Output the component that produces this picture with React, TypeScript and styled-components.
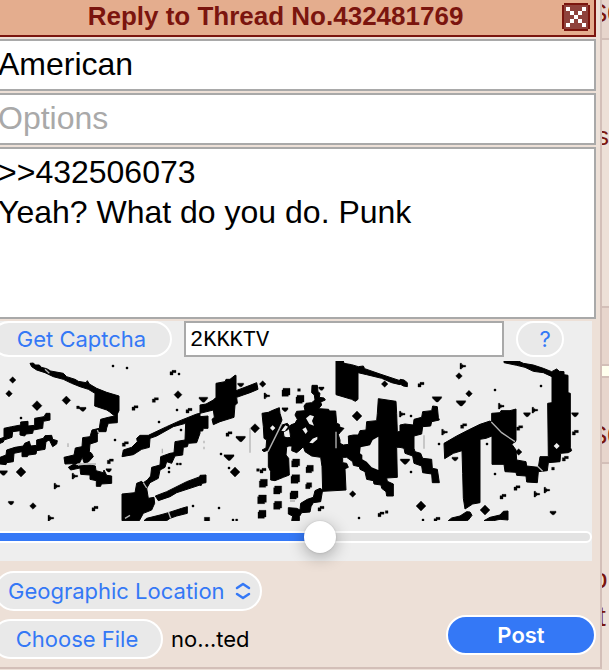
import React, { useRef, useState } from "react";
import styled, { createGlobalStyle } from "styled-components";

const c = {
  panel: "#ede0d7",
  line: "#d3bfb8",
  shade: "#e7d5cc",
  maroon: "#7b150e",
  field: "#a9a9a9",
  blue: "#3478f6",
};

const GlobalStyle = createGlobalStyle`
  *, *::before, *::after { box-sizing: border-box; }
  html, body { margin: 0; background: ${c.panel}; overflow: hidden; }
  body { font-family: "Liberation Sans", Arial, sans-serif; color: #000; }
  button, input, textarea, select { margin: 0; font: inherit; color: inherit; }
`;

const Page = styled.div`
  display: grid;
  grid-template-columns: minmax(0, 1fr) 7px;
  min-height: 100vh;
  overflow: hidden;
`;

const Dialog = styled.form`
  align-self: start;
  margin-left: -6px;
  padding: 0 4px 8px 0;
  border: solid ${c.line};
  border-width: 0 2px 2px 0;
  background: ${c.panel};
`;

const Header = styled.header`
  display: flex;
  align-items: center;
  gap: 5px;
  height: 37px;
  margin-bottom: 2px;
  padding: 0 4px 2px 0;
  border: solid ${c.maroon};
  border-width: 0 2px 2px 0;
  background: #e4ad8e;
`;

const Title = styled.h1`
  flex: 1;
  margin: 0;
  padding-bottom: 2px;
  color: ${c.maroon};
  font-size: 26px;
  line-height: 32px;
  text-align: center;
`;

const CloseButton = styled.button`
  width: 28px;
  height: 28px;
  padding: 0;
  border: 0;
  background: none;
  svg { display: block; }
`;

const Field = styled.input`
  display: block;
  width: 100%;
  height: 52px;
  margin-bottom: 2px;
  padding: 0 2px 2px;
  border: 2px solid ${c.field};
  outline: 0;
  background: #fff;
  font-size: 32px;
  &::placeholder { color: #a9a9a9; opacity: 1; }
`;

const Comment = styled.textarea`
  display: block;
  width: 100%;
  height: 172px;
  margin-bottom: 2px;
  padding: 3px 2px;
  border: 2px solid ${c.field};
  outline: 0;
  background: #fff;
  font-size: 32px;
  line-height: 40px;
  resize: none;
`;

const CaptchaPanel = styled.section`
  margin-right: 4px;
  padding-bottom: 8px;
  background: #eee;
`;

const CaptchaRow = styled.div`
  display: flex;
  gap: 12px;
  height: 36px;
  margin-bottom: 4px;
`;

const Pill = styled.button<{ $width: number; $height: number; $primary?: boolean }>`
  flex: none;
  width: ${(p) => p.$width}px;
  height: ${(p) => p.$height}px;
  padding: 0;
  border: 2px solid #fff;
  border-radius: 20px;
  background: ${(p) => (p.$primary ? c.blue : "#e9e9e9")};
  color: ${(p) => (p.$primary ? "#fff" : c.blue)};
  font-family: Inter, sans-serif;
  font-size: 22px;
  font-weight: ${(p) => (p.$primary ? 600 : 400)};
  line-height: 32px;
`;

const LeftPill = styled(Pill)`
  margin-left: -3px;
`;

const HelpButton = styled(Pill)`
  padding-left: 10px;
`;

const CaptchaInput = styled.input`
  width: 320px;
  height: 36px;
  padding: 2px 4px 0;
  border: 2px solid ${c.field};
  outline: 0;
  background: #fff;
  font-family: "Liberation Mono", "Courier New", monospace;
  font-size: 22px;
`;

const Challenge = styled.svg`
  display: block;
  width: 592px;
  height: 160px;
  margin-left: 6px;
`;

const Slider = styled.input<{ $fill: number }>`
  display: block;
  width: 100%;
  height: 32px;
  appearance: none;
  background: none;
  outline: 0;
  &::-webkit-slider-runnable-track {
    height: 12px;
    border: 2px solid #fff;
    border-radius: 6px;
    background: linear-gradient(to right, ${c.blue} ${(p) => p.$fill}%, #e3e3e3 ${(p) => p.$fill}%);
  }
  &::-webkit-slider-thumb {
    appearance: none;
    width: 32px;
    height: 32px;
    margin-top: -12px;
    border-radius: 50%;
    background: #fff;
    box-shadow: 0 4px 16px rgba(0, 0, 0, 0.3), 0 0 2px rgba(0, 0, 0, 0.15);
  }
`;

const Footer = styled.footer`
  display: flex;
  justify-content: space-between;
  align-items: flex-end;
  padding-top: 10px;
`;

const Choices = styled.div`
  display: grid;
  gap: 8px;
`;

const SelectBox = styled.div`
  display: grid;
  align-items: center;
  width: 268px;
  svg {
    grid-area: 1 / 1;
    justify-self: end;
    margin-right: 11px;
    pointer-events: none;
  }
`;

const Select = styled.select`
  grid-area: 1 / 1;
  width: 100%;
  height: 40px;
  padding: 0 36px 0 12px;
  border: 2px solid #fff;
  border-radius: 20px;
  appearance: none;
  background: #e9e9e9;
  color: ${c.blue};
  font-family: Inter, sans-serif;
  font-size: 22px;
`;

const FileRow = styled.div`
  display: flex;
  align-items: center;
  gap: 8px;
  font-family: Inter, sans-serif;
  font-size: 22px;
`;

const PostButton = styled(Pill)`
  margin-bottom: 4px;
`;

const Behind = styled.aside`
  overflow: hidden;
  color: ${c.maroon};
  white-space: nowrap;
`;

const Slice = styled.div<{ $height: number; $shade?: boolean; $top?: number; $indent?: number }>`
  height: ${(p) => p.$height}px;
  padding-top: ${(p) => p.$top ?? 0}px;
  overflow: hidden;
  border-bottom: 2px solid ${c.line};
  background: ${(p) => (p.$shade ? c.shade : c.panel)};
  font-size: 26px;
  line-height: 26px;
  text-indent: ${(p) => p.$indent ?? 0}px;
`;

const Gap = styled.div`
  height: 12px;
  border-bottom: 2px solid ${c.line};
  background: #ffffee;
`;

const LastSlice = styled.div`
  padding-top: 96px;
  font-size: 28px;
  line-height: 38px;
`;

const Word = styled.div<{ $indent: number }>`
  text-indent: ${(p) => p.$indent}px;
`;

type Kind = "d" | "s" | "t" | "f" | "k" | "b";
type Speck = [Kind, number, number, number];

const speckPath = ([kind, x, y, r]: Speck) => {
  switch (kind) {
    case "d":
      return `M${x} ${y - r - 1}l${r + 1} ${r + 1}l${-r - 1} ${r + 1}l${-r - 1} ${-r - 1}z`;
    case "b":
      return `M${x - r + 3} ${y - r}h${r * 2 - 3}v${r * 2 - 4}h-5v4h${-r * 2 + 5}v${-r * 2 + 5}h3z`;
    case "t":
      return `M${x - r} ${y - r / 2}h${r * 2}v4l${-r + 3} ${r - 2}h-5l${-r + 2} ${-r + 2}z`;
    case "f":
      return `M${x - 8} ${y - 8}h5v4h4v2h8v5h-8v2h-4v4h-5z`;
    case "k":
      return `M${x - 8} ${y + 7}v-10h6v-4h12v7h-9v7z`;
    default:
      return `M${x - r} ${y - r}h${r * 2}v${r * 2}h${-r * 2}z`;
  }
};

const segments: { shapes: string[]; marks: string[]; specks: Speck[] }[] = [
  {
    shapes: [
      "90,10 100,9 106,15 118,15 124,22 140,26 152,33 190,40 200,50 225,58 235,64 258,68 262,62 268,72 290,85 320,97 357,108 357,152 352,162 352,188 325,190 320,204 318,215 297,215 292,224 292,245 270,252 268,275 275,280 280,290 265,306 252,308 247,292 238,310 195,312 192,292 222,285 226,264 246,260 248,233 270,230 276,210 298,205 302,178 325,172 344,168 328,155 320,150 284,138 285,100 265,88 240,80 215,70 190,58 160,50 135,38 110,30 95,20",
      "205,322 222,312 235,318 270,315 286,318 288,332 310,338 312,330 320,346 335,348 335,370 304,372 302,379 289,379 289,362 270,358 270,345 242,343 240,324 212,330",
      "0,236 12,232 12,205 35,200 62,195 62,186 84,184 84,198 104,196 104,175 132,170 138,160 150,160 150,180 130,184 128,205 100,210 98,220 78,222 74,228 60,225 60,212 38,215 36,232 12,240 10,246 0,250",
      "0,292 18,285 20,270 45,262 70,258 74,250 88,244 92,258 110,256 110,240 130,235 135,227 155,226 158,238 172,242 170,252 158,260 148,240 138,245 135,268 110,272 108,282 85,285 82,290 66,290 66,275 42,280 40,305 20,308 18,314 0,312",
      "366,290 370,270 395,262 412,245 410,235 420,226 445,226 500,200 540,182 590,162 600,160 600,220 590,248 565,250 562,260 550,262 548,285 525,288 515,310 500,305 495,322 480,330 475,355 450,368 440,385 430,368 442,360 452,348 455,322 480,315 482,290 510,280 522,278 525,245 555,240 557,190 520,200 470,228 450,235 448,262 425,268 400,284",
      "366,402 405,398 410,370 425,364 440,385 445,415 462,412 464,430 455,450 430,460 418,482 366,482",
      "466,408 500,395 560,365 600,350 600,375 570,385 530,398 510,410 475,422",
      "432,482 440,475 480,465 505,458 545,445 562,440 562,460 530,468 510,475 500,482",
    ],
    marks: ["M232 312H288", "M204 250V261", "M487 266V280", "M375 475L390 466", "M430 368L440 384", "M505 455L512 475", "M135 28L148 40", "M292 210L296 220"],
    specks: [
      ["d", 38, 60, 9], ["d", 27, 101, 9], ["d", 111, 137, 14], ["d", 199, 121, 12], ["d", 63, 336, 14],
      ["d", 99, 438, 9], ["t", 248, 147, 10], ["d", 534, 104, 11], ["t", 10, 338, 12], ["t", 33, 428, 8],
      ["s", 339, 18, 3], ["s", 381, 24, 3], ["s", 537, 42, 3], ["s", 63, 174, 3], ["s", 531, 150, 3],
      ["s", 477, 186, 3], ["s", 345, 240, 3], ["s", 543, 210, 3], ["s", 579, 438, 3], ["s", 507, 336, 3],
      ["s", 507, 324, 3], ["s", 234, 142, 4], ["f", 224, 348, 8], ["f", 170, 378, 8], ["f", 152, 474, 8], ["k", 518, 38, 8],
      ["k", 404, 144, 8], ["k", 465, 120, 8], ["k", 566, 152, 8], ["k", 284, 446, 8], ["k", 330, 304, 8],
      ["t", 326, 330, 8], ["k", 375, 252, 8], ["s", 532, 312, 3], ["s", 541, 312, 3],
    ],
  },
  {
    shapes: [
      "48,70 75,65 78,58 90,58 105,46 108,46 108,92 150,76 170,68 174,88 150,98 130,105 110,112 112,130 105,135 102,172 60,185 40,194 36,178 43,172 40,150 0,160 0,135 18,132 40,120 48,112",
      "0,170 24,168 24,205 10,205 8,213 0,213",
      "0,346 18,345 18,368 6,370 4,376 0,376",
      "186,160 205,157 220,150 238,143 240,160 246,180 225,230 205,270 192,275 186,270 198,264 200,240 192,235 190,200",
      "246,195 262,190 270,200 265,208 250,216 252,230 270,238 275,250 260,262 258,285 266,295 268,345 250,352 225,362 212,360 212,335 205,320 205,275",
      "268,205 272,195 285,190 292,178 285,165 290,154 315,152 312,138 318,130 335,128 345,120 343,105 335,98 336,76 352,76 354,95 360,100 358,112 372,114 376,120 362,126 365,135 356,146 386,148 388,153 407,153 410,190 418,193 420,202 432,205 420,218 415,224 420,240 420,250 430,255 446,253 445,228 460,225 475,225 480,212 498,210 500,185 530,182 532,160 535,116 588,124 590,160 592,215 600,215 600,262 590,262 592,352 560,354 562,364 580,372 580,408 560,408 558,395 545,385 543,375 522,372 520,362 500,358 495,335 480,328 478,320 460,316 458,305 440,292 428,292 428,308 440,310 445,322 435,326 438,390 368,394 366,320 362,292 335,288 315,275 310,260 300,270 290,278 275,272 276,258 255,258 250,235 272,232",
      "408,3 430,3 432,10 455,14 475,20 490,18 494,26 540,42 600,62 600,74 575,68 545,55 500,44 474,38 474,118 466,124 455,118 408,104",
      "368,390 362,425 340,428 333,440 330,456 305,458 298,470 298,482 275,482 278,468 265,462 265,443 290,445 300,450 302,430 322,418 340,412 345,392 360,385",
    ],
    marks: ["M246 190L204 275", "M150 205V278", "M12 242V250", "M12 260V268", "M408 215V265", "M270 423H285"],
    specks: [
      ["b", 258, 97, 12], ["b", 300, 118, 12], ["b", 287, 309, 12], ["b", 329, 327, 11], ["b", 286, 357, 13],
      ["b", 326, 377, 9], ["b", 233, 390, 12], ["b", 282, 405, 12], ["b", 186, 418, 13], ["b", 233, 436, 12],
      ["b", 190, 370, 12], ["b", 186, 463, 12], ["d", 188, 72, 9], ["d", 554, 72, 9], ["d", 471, 168, 14],
      ["d", 165, 205, 13], ["t", 122, 236, 14], ["d", 105, 336, 14], ["t", 87, 292, 15], ["d", 458, 402, 9],
      ["t", 10, 118, 13], ["t", 122, 74, 9], ["f", 200, 107, 8], ["k", 86, 222, 8], ["k", 188, 332, 8],
      ["s", 174, 330, 4], ["k", 362, 446, 8], ["k", 542, 463, 8], ["s", 560, 456, 4], ["s", 21, 480, 8],
      ["s", 99, 480, 3], ["s", 110, 480, 3], ["s", 297, 90, 4], ["s", 63, 282, 3], ["s", 87, 324, 3],
      ["s", 57, 444, 3], ["s", 477, 474, 3], ["t", 255, 148, 9], ["t", 364, 85, 8],
    ],
  },
  {
    shapes: [
      "0,58 12,60 22,68 22,80 10,78 0,72",
      "0,195 15,192 40,195 42,178 65,172 68,155 95,152 98,138 112,140 115,172 118,180 95,185 92,198 68,200 65,222 42,228 42,265 45,275 62,280 68,295 95,298 97,325 112,328 118,368 97,368 95,342 68,338 65,318 42,310 38,288 15,280 12,265 0,262",
      "132,250 170,228 205,210 240,193 270,183 348,244 335,252 348,270 350,300 378,305 380,318 415,322 420,290 445,290 443,130 456,128 456,50 430,38 400,34 375,22 350,16 312,8 312,3 355,3 370,10 400,15 430,25 455,35 470,27 478,34 492,35 492,44 504,46 504,98 511,100 511,262 515,272 505,278 482,280 480,305 445,308 442,332 415,335 412,368 380,366 378,348 350,346 348,337 315,335 312,313 276,313 276,228 258,235 240,238 240,428 218,432 195,447 190,415 188,340 186,272 160,280 134,296",
      "275,188 275,160 300,158 303,152 330,152 348,147 348,242 335,242",
      "145,482 155,474 180,468 200,455 210,456 216,466 205,480 200,482",
      "252,482 270,472 300,465 310,454 324,453 324,480 300,478 280,482",
    ],
    marks: ["M274 186L305 218L345 245", "M72 226V266", "M412 318L428 334"],
    specks: [
      ["d", 177, 48, 9], ["d", 207, 101, 9], ["d", 63, 438, 14], ["d", 255, 450, 14], ["d", 356, 276, 9],
      ["t", 111, 117, 14], ["t", 183, 129, 14], ["t", 381, 163, 10], ["t", 525, 163, 10], ["t", 15, 304, 14],
      ["t", 165, 296, 9], ["t", 459, 458, 9], ["f", 188, 18, 8], ["f", 303, 138, 8], ["f", 404, 150, 8],
      ["f", 133, 216, 8], ["f", 410, 402, 8], ["f", 440, 390, 8], ["k", 62, 74, 8], ["k", 190, 198, 8],
      ["k", 358, 204, 8], ["k", 495, 296, 8], ["k", 525, 218, 8], ["k", 350, 384, 8], ["k", 308, 410, 8],
      ["k", 110, 479, 8], ["s", 285, 90, 3], ["s", 423, 78, 3], ["s", 33, 168, 3], ["s", 117, 252, 3],
      ["s", 261, 252, 3], ["s", 285, 342, 3], ["s", 33, 336, 3], ["s", 69, 480, 3], ["s", 459, 326, 4],
      ["f", 6, 162, 6],
    ],
  },
];

const ChallengeArt = () => (
  <Challenge viewBox="0 3 1776 480" role="img" aria-label="Captcha challenge">
    {segments.map((segment, i) => (
      <g key={i} transform={`translate(${i * 600} 0)`}>
        <g stroke="#000" strokeWidth="3" strokeLinejoin="round">
          {segment.shapes.map((points, n) => (
            <polygon key={n} points={points} />
          ))}
        </g>
        <path d={segment.specks.map(speckPath).join("")} stroke="#000" strokeWidth="1" />
        <path d={segment.marks.join("")} fill="none" stroke="#b4b4b4" strokeWidth="4" />
      </g>
    ))}
    <g fill="#eee">
      <path d="M1082 262L1110 256L1118 240L1135 230V330L1115 322L1100 305L1087 298V285L1080 280Z" />
      <path d="M818 196l8 8l-8 8l-8-8zM1670 249l9 9l-9 9l-9-9z" />
      <path d="M918 175l12-10l12 4l-6 14l6 14l-14-5zM907 208l10-6l6 12l-6 8zM938 236l14-6v8l-14 12l-10-2zM844 212l12-16l8 4l-10 14z" />
    </g>
    <path d="M1088 240l14-8l8 8l-2 14l-10 4l-6-10z" />
  </Challenge>
);

const CloseIcon = () => (
  <svg width="28" height="28" viewBox="0 0 14 14" shapeRendering="crispEdges" aria-hidden="true">
    <path fill={c.maroon} d="M1 0h12v1h1v12h-1v1H1v-1H0V1h1z" />
    <path fill="#8f423c" d="M1 1h12v12H1z" />
    <path
      fill="#fff"
      d="M2 2h2v2H2zM4 4h2v2H4zM6 6h2v2H6zM8 8h2v2H8zM10 10h2v2h-2zM10 2h2v2h-2zM8 4h2v2H8zM4 8h2v2H4zM2 10h2v2H2z"
    />
  </svg>
);

const Chevrons = () => (
  <svg width="16" height="18" viewBox="0 0 16 18" fill="none" stroke={c.blue} strokeWidth="2.500" strokeLinecap="round" strokeLinejoin="round" aria-hidden="true">
    <path d="M2 6L8 2l6 4M2 12L8 16l6-4" />
  </svg>
);

export default function App() {
  const [position, setPosition] = useState(54.8);
  const fileInput = useRef<HTMLInputElement>(null);
  return (
    <>
      <GlobalStyle />
      <Page>
        <Dialog onSubmit={(e) => e.preventDefault()}>
          <Header>
            <Title>Reply to Thread No.432481769</Title>
            <CloseButton type="button" aria-label="Close">
              <CloseIcon />
            </CloseButton>
          </Header>
          <Field aria-label="Name" defaultValue="American" />
          <Field aria-label="Options" placeholder="Options" />
          <Comment aria-label="Comment" spellCheck={false} defaultValue={">>432506073\nYeah? What do you do. Punk"} />
          <CaptchaPanel>
            <CaptchaRow>
              <LeftPill type="button" $width={181} $height={36}>Get Captcha</LeftPill>
              <CaptchaInput aria-label="Captcha answer" defaultValue="2KKKTV" spellCheck={false} />
              <HelpButton type="button" $width={48} $height={36}>?</HelpButton>
            </CaptchaRow>
            <ChallengeArt />
            <Slider
              type="range"
              aria-label="Captcha alignment"
              min={0}
              max={100}
              step={0.1}
              value={position}
              $fill={position}
              onChange={(e) => setPosition(Number(e.target.value))}
            />
          </CaptchaPanel>
          <Footer>
            <Choices>
              <SelectBox>
                <Select aria-label="Flag" defaultValue="geo">
                  <option value="geo">Geographic Location</option>
                </Select>
                <Chevrons />
              </SelectBox>
              <FileRow>
                <LeftPill type="button" $width={172} $height={40} onClick={() => fileInput.current?.click()}>
                  Choose File
                </LeftPill>
                <input ref={fileInput} type="file" aria-label="File" hidden />
                <span>no…ted</span>
              </FileRow>
            </Choices>
            <PostButton type="submit" $width={150} $height={40} $primary>Post</PostButton>
          </Footer>
        </Dialog>
        <Behind aria-hidden="true">
          <Slice $height={40} $shade $indent={-12}>S0</Slice>
          <Slice $height={268} $top={83} $indent={-6}>s</Slice>
          <Slice $height={58} $shade />
          <Gap />
          <Slice $height={86} $shade $top={44} $indent={-12}>S0</Slice>
          <LastSlice>
            <Word $indent={-10}>o</Word>
            <Word $indent={-4}>t</Word>
          </LastSlice>
        </Behind>
      </Page>
    </>
  );
}
